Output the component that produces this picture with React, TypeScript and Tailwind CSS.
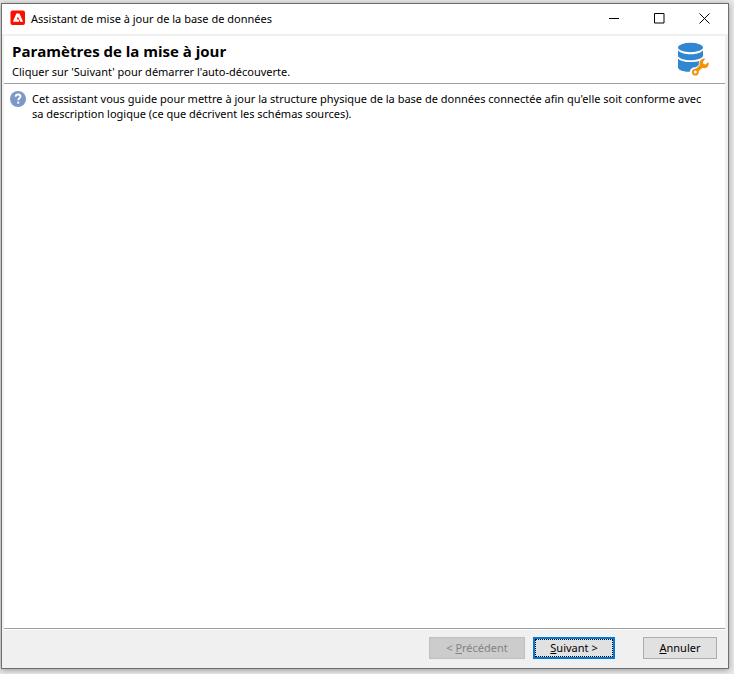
import type { ButtonHTMLAttributes, ReactNode } from "react";

function AppLogo() {
  return (
    <svg width="16" height="16" viewBox="0 0 16 16" className="shrink-0">
      <rect x="0.5" y="0.5" width="14.5" height="14.5" rx="2" fill="#fa0f00" />
      <path d="M6.300 3.500h3.200L13 11.700h-2.600L7.900 6.700 6.700 9.300h1.700l.9 2.400H2.900z" fill="#fff" />
    </svg>
  );
}

function HelpIcon() {
  return (
    <svg width="16" height="16" viewBox="0 0 16 16" className="shrink-0">
      <circle cx="8" cy="8" r="8" fill="#7a99c8" />
      <path
        d="M5.600 5.800c.1-1.500 1.100-2.300 2.500-2.300 1.400 0 2.400.8 2.400 2 0 1.700-2.300 1.800-2.300 3.700"
        fill="none"
        stroke="#fff"
        strokeWidth="1.8"
      />
      <rect x="7.200" y="10.600" width="2" height="2" fill="#fff" />
    </svg>
  );
}

function DatabaseIcon() {
  return (
    <svg width="32" height="34" viewBox="0 0 32 34" className="shrink-0">
      <ellipse cx="13.500" cy="5.500" rx="12.500" ry="4.700" fill="#3186d1" />
      <path
        d="M1 8.300c2 2.700 7 4 12.500 4s10.500-1.300 12.500-4v5.900c-1.500 2.400-6.500 4-12.500 4S2.500 16.600 1 14.200z"
        fill="#3186d1"
      />
      <path
        d="M1 16.700c2.500 2.300 7 3.400 12.500 3.400 3.500 0 6.500-.4 9-1.400-.7 1.300-.9 2.600-.6 4.200l-3.200 2.400c-3.200-.2-5.500 1.300-5.900 4.500C7 30 1.800 28.300 1 25.800z"
        fill="#3186d1"
      />
      <path
        d="M28.300 16.600l-2.400 3.300.5 2.100 2.100.5 2.800-2.600c1.200 3-.8 6.300-4.200 6.300-.7 0-1.200-.1-1.700-.4l-3.700 3.500c.3 2.600-1.200 4.300-3.400 4.300-2 0-3.500-1.400-3.500-3.400 0-2.200 1.800-3.700 4.100-3.400l3.800-3.600c-1-3.700 1.600-7 5.600-6.600z"
        fill="#ef9309"
      />
      <circle cx="18.300" cy="30" r="1.500" fill="#fff" />
    </svg>
  );
}

function CaptionButton({ label, children }: { label: string; children: ReactNode }) {
  return (
    <button type="button" aria-label={label} className="flex h-7 w-[45px] items-center justify-center">
      <svg width="11" height="11" viewBox="0 0 11 11" fill="none" stroke="#000">
        {children}
      </svg>
    </button>
  );
}

function DialogButton({ className, children, ...rest }: ButtonHTMLAttributes<HTMLButtonElement>) {
  return (
    <button
      type="button"
      className={`flex h-[22px] items-center justify-center ${className}`}
      {...rest}
    >
      {children}
    </button>
  );
}

export default function App() {
  return (
    <div className="flex min-h-screen bg-[#e8e8e8] pt-[3px] pr-[5px] pb-[5px] pl-px font-['Noto_Sans',sans-serif] text-[11px] leading-[15px] text-black">
      <div className="flex flex-1 flex-col border border-[#6e6e6e] bg-[#f0f0f0] shadow-[0_1px_6px_rgba(0,0,0,0.35)]">
        {/* Title bar */}
        <div className="flex h-[30px] items-start bg-white pr-px pl-2">
          <div className="flex flex-1 items-center gap-[5px] pt-[6px]">
            <AppLogo />
            <h1>Assistant de mise à jour de la base de données</h1>
          </div>
          <CaptionButton label="Réduire">
            <path d="M0 5.500h10" />
          </CaptionButton>
          <CaptionButton label="Agrandir">
            <path d="M.5.5h9.500v9.500H.5z" />
          </CaptionButton>
          <CaptionButton label="Fermer">
            <path d="M.5.5l10 10M10.500.5l-10 10" />
          </CaptionButton>
        </div>

        <div className="flex flex-1 flex-col pt-[2px] pr-[3px] pl-[2px]">
          {/* Header */}
          <header className="flex h-12 justify-between border-b border-[#a0a0a0] bg-white pr-4 pl-2">
            <div className="pt-1">
              <h2 className="font-['Open_Sans',sans-serif] text-[15px] leading-[22px] font-bold">
                Paramètres de la mise à jour
              </h2>
              <p className="pt-[2px]">Cliquer sur 'Suivant' pour démarrer l'auto-découverte.</p>
            </div>
            <div className="pt-[6px]">
              <DatabaseIcon />
            </div>
          </header>

          <main className="flex flex-1 items-start gap-[6px] bg-white pt-[7px] pr-4 pl-[6px]">
            <HelpIcon />
            <p>
              Cet assistant vous guide pour mettre à jour la structure physique de la base de données connectée afin
              qu'elle soit conforme avec sa description logique (ce que décrivent les schémas sources).
            </p>
          </main>

          {/* Buttons */}
          <footer className="border-t border-[#a0a0a0]">
            <div className="flex justify-end border-t border-white pt-[7px] pr-2 pb-[9px]">
              <DialogButton disabled className="w-24 border border-[#bfbfbf] bg-[#cccccc] text-[#838383]">
                <span className="pb-px">
                  &lt; <u>P</u>récédent
                </span>
              </DialogButton>
              <DialogButton className="ml-2 w-[82px] border-2 border-[#0078d7] bg-[#e1e1e1]">
                <span className="flex h-full w-full items-center justify-center border border-dotted border-black">
                  <span className="pb-px">
                    <u>S</u>uivant &gt;
                  </span>
                </span>
              </DialogButton>
              <DialogButton className="ml-7 w-[74px] border border-[#adadad] bg-[#e1e1e1]">
                <span className="pb-px">
                  <u>A</u>nnuler
                </span>
              </DialogButton>
            </div>
          </footer>
        </div>
      </div>
    </div>
  );
}
